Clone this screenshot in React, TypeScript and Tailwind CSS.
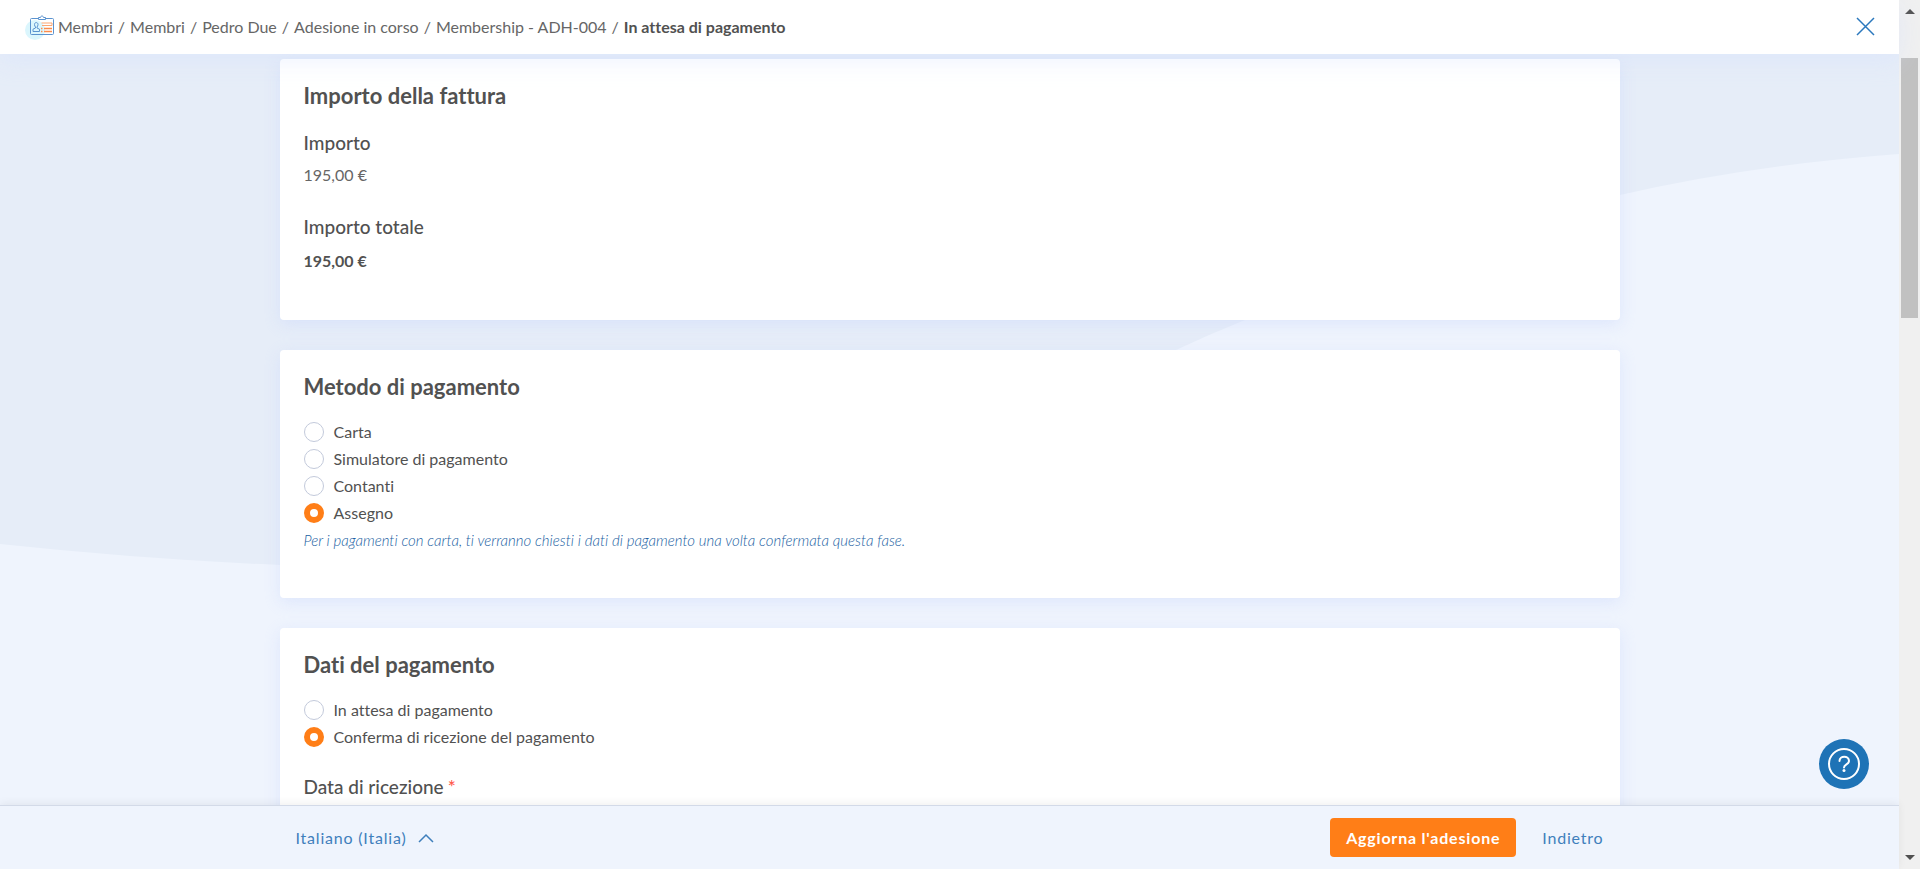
import { useState } from "react";
import type { ReactNode } from "react";

const CRUMBS = [
  "Membri",
  "Membri",
  "Pedro Due",
  "Adesione in corso",
  "Membership - ADH-004",
];

const METHODS = ["Carta", "Simulatore di pagamento", "Contanti", "Assegno"];

const STATUSES = ["In attesa di pagamento", "Conferma di ricezione del pagamento"];

function MembersIcon() {
  return (
    <svg className="h-[25px] w-[30px] shrink-0" viewBox="0 0 30 25" fill="none" aria-hidden="true">
      <circle cx="11" cy="15" r="10" fill="#dbf6fd" />
      <rect x="6.5" y="3.5" width="23" height="16" rx="1" stroke="#5b93cf" />
      <path
        d="M14.5 4.5v-2h2c0-2 3-2 3 0h2v2z"
        fill="#fff"
        stroke="#5b93cf"
        strokeLinejoin="round"
      />
      <path
        d="M10.5 9.5c0-2.600 3.500-2.600 3.500 0 0 1.200-.5 2-1 2.500v1l2.500 1.200v2.300H9v-2.300l2.500-1.200v-1c-.5-.5-1-1.300-1-2.500z"
        stroke="#5b93cf"
      />
      <path d="M17.500 8h10.500v2.500H18" stroke="#fba673" />
      <path d="M17 13.500h1.500M20 13.500h8M17 16.500h1.500M20 16.500h8" stroke="#fb8c4c" strokeWidth="1.500" />
    </svg>
  );
}

function Waves() {
  return (
    <svg
      className="absolute inset-0 h-full w-full"
      viewBox="0 0 1899 869"
      preserveAspectRatio="none"
      aria-hidden="true"
    >
      <path
        fill="#eff4fd"
        d="M0 544Q140 559 280 565C760 584 920 470 1176 350Q1210 334 1245 320Q1440 236 1620 195Q1750 165 1899 154V869H0Z"
      />
    </svg>
  );
}

function Card({ title, children }: { title: string; children: ReactNode }) {
  return (
    <section className="rounded bg-white px-6 pt-[25px] pb-[47px] shadow-[0_4px_16px_rgba(200,212,252,0.45)]">
      <h2 className="text-[22px] leading-6 font-bold">{title}</h2>
      {children}
    </section>
  );
}

function RadioList({
  name,
  options,
  initial,
}: {
  name: string;
  options: string[];
  initial: string;
}) {
  const [value, setValue] = useState(initial);

  return (
    <div role="radiogroup" className="mt-[19px] flex flex-col items-start">
      {options.map((option) => (
        <label key={option} className="flex h-[27px] items-center gap-[10px] leading-5">
          <input
            type="radio"
            name={name}
            value={option}
            checked={value === option}
            onChange={() => setValue(option)}
            className="h-5 w-5 appearance-none rounded-full border border-[#c3cadb] bg-white checked:border-[6px] checked:border-[#ff7e17]"
          />
          {option}
        </label>
      ))}
    </div>
  );
}

function Scrollbar() {
  return (
    <div className="flex w-[21px] shrink-0 flex-col items-center bg-[#f0f0f0]" aria-hidden="true">
      <svg className="mt-2 h-[6px] w-[10px]" viewBox="0 0 10 6">
        <path d="M5 1l5 5H0z" fill="#505050" />
      </svg>
      <div className="mt-11 h-[260px] w-[17px] bg-[#c1c1c1]" />
      <svg className="mt-auto mb-2 h-[6px] w-[10px]" viewBox="0 0 10 6">
        <path d="M5 5L0 0h10z" fill="#505050" />
      </svg>
    </div>
  );
}

export default function App() {
  return (
    <div className="flex h-screen overflow-hidden font-[Lato,sans-serif] text-base text-[#515151] [font-variant-ligatures:none]">
      <div className="relative flex min-w-0 flex-1 flex-col bg-[#e6edf8]">
        <Waves />

        <header className="relative z-10 flex h-[54px] shrink-0 items-center bg-white px-6 shadow-[0_6px_24px_rgba(210,223,255,0.4)]">
          <nav aria-label="Breadcrumb" className="flex flex-1 items-center gap-1">
            <MembersIcon />
            <ol className="flex items-center">
              {CRUMBS.map((crumb, i) => (
                <li key={i} className="whitespace-nowrap text-[#666]">
                  <a href="#">{crumb}</a>
                  <span className="mx-[5px]">/</span>
                </li>
              ))}
              <li className="font-bold whitespace-nowrap" aria-current="page">
                In attesa di pagamento
              </li>
            </ol>
          </nav>
          <button type="button" aria-label="Chiudi" className="text-[#2b78bd]">
            <svg className="h-5 w-5" viewBox="0 0 20 20" fill="none" stroke="currentColor" strokeWidth="1.500">
              <path d="M2 1l17 17M19 1l-17 17" />
            </svg>
          </button>
        </header>

        <main className="relative min-h-0 flex-1 overflow-hidden pt-[5px]">
          <div className="mx-auto flex max-w-[1340px] flex-col gap-[30px]">
            <Card title="Importo della fattura">
              <dl>
                <dt className="mt-[23px] text-[19px] leading-6 font-medium">Importo</dt>
                <dd className="mt-2 leading-6 text-[#666]">195,00 €</dd>
                <dt className="mt-7 text-[19px] leading-6 font-medium">Importo totale</dt>
                <dd className="mt-[10px] leading-6 font-bold">195,00 €</dd>
              </dl>
            </Card>

            <Card title="Metodo di pagamento">
              <RadioList name="method" options={METHODS} initial="Assegno" />
              <p className="mt-1 text-[15px] leading-[21px] font-light text-[#1c5fa3] italic">
                Per i pagamenti con carta, ti verranno chiesti i dati di pagamento una volta
                confermata questa fase.
              </p>
            </Card>

            <Card title="Dati del pagamento">
              <RadioList
                name="status"
                options={STATUSES}
                initial="Conferma di ricezione del pagamento"
              />
              <h3 className="mt-[25px] flex gap-1 text-[19px] leading-6 font-medium">
                Data di ricezione<span className="text-[#ff5a4e]">*</span>
              </h3>
            </Card>
          </div>
        </main>

        <footer className="relative z-10 h-16 shrink-0 border-t border-[#d3dae8] bg-[#eff4fd] shadow-[0_-2px_8px_rgba(0,0,0,0.06)]">
          <div className="mx-auto flex h-full max-w-[1340px] items-center px-4 text-[#3f7fbc]">
            <button type="button" className="flex items-center gap-3 tracking-wider">
              Italiano (Italia)
              <svg className="h-[10px] w-4" viewBox="0 0 16 10" fill="none" stroke="currentColor" strokeWidth="1.500">
                <path d="M1 9l7-7 7 7" />
              </svg>
            </button>
            <button
              type="submit"
              className="ml-auto h-[39px] rounded bg-[#ff7e17] px-4 font-bold tracking-wider text-white"
            >
              Aggiorna l'adesione
            </button>
            <a href="#" className="ml-[26px] tracking-wider">
              Indietro
            </a>
          </div>
        </footer>

        <button
          type="button"
          aria-label="Aiuto"
          className="absolute right-[30px] bottom-20 z-20 h-[50px] w-[50px] rounded-full bg-[#1e73b6]"
        >
          <svg viewBox="0 0 50 50" fill="none" stroke="#fff" strokeWidth="2" strokeLinecap="round">
            <circle cx="25" cy="25" r="15" />
            <path d="M20.500 22c0-5.800 9.500-5.800 9.500 0 0 3.500-5 3.200-5 6.500" />
            <circle cx="25" cy="31.500" r="1.500" fill="#fff" stroke="none" />
          </svg>
        </button>
      </div>

      <Scrollbar />
    </div>
  );
}
